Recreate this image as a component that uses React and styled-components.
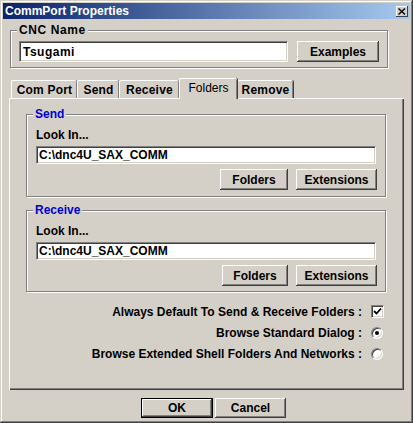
import styled, { createGlobalStyle } from "styled-components";

const face = "#d4d0c8";
const shadow = "#808080";
const darkShadow = "#404040";

const GlobalStyle = createGlobalStyle`
  html, body {
    margin: 0;
    padding: 0;
    background: ${face};
  }
  * {
    box-sizing: border-box;
  }
`;

const Window = styled.div`
  width: 413px;
  height: 423px;
  padding: 3px;
  background: ${face};
  font-family: "Liberation Sans", Arial, sans-serif;
  font-size: 11px;
  font-weight: bold;
  color: #000;
  box-shadow: inset -1px -1px 0 ${darkShadow}, inset 1px 1px 0 ${face},
    inset -2px -2px 0 ${shadow}, inset 2px 2px 0 #fff;
  display: flex;
  flex-direction: column;
`;

const TitleBar = styled.div`
  height: 16px;
  background: linear-gradient(to right, #0a246a, #a6caf0);
  display: flex;
  align-items: center;
  justify-content: space-between;
  padding: 0 2px 0 2px;
`;

const Title = styled.span`
  color: #fff;
  font-size: 12px;
  font-weight: bold;
  line-height: 14px;
`;

const CloseButton = styled.div`
  width: 12px;
  height: 11px;
  background: ${face};
  box-shadow: inset -1px -1px 0 ${darkShadow}, inset 1px 1px 0 #fff;
  display: flex;
  align-items: center;
  justify-content: center;
`;

const GroupBox = styled.div`
  position: relative;
  margin: ${(p) => p.$margin};
  width: ${(p) => p.$width}px;
  height: ${(p) => p.$height}px;
  border: 1px solid ${shadow};
  box-shadow: inset 1px 1px 0 #fff, 1px 1px 0 #fff;
  padding: ${(p) => p.$padding};
`;

const Legend = styled.span`
  position: absolute;
  top: -8px;
  left: 6px;
  padding: 0 2px;
  background: ${face};
  line-height: 14px;
  font-size: 12px;
  letter-spacing: ${(p) => p.$spacing || 0}px;
  color: ${(p) => p.$color || "#000"};
`;

const Row = styled.div`
  display: flex;
  align-items: center;
  justify-content: ${(p) => p.$justify || "flex-start"};
  gap: ${(p) => p.$gap || 0}px;
`;

const TextField = styled.div`
  width: ${(p) => p.$width}px;
  height: ${(p) => p.$height}px;
  background: #fff;
  border: 1px solid;
  border-color: ${shadow} #fff #fff ${shadow};
  box-shadow: inset 1px 1px 0 ${darkShadow}, inset -1px -1px 0 ${face};
  padding: 0 2px 0 ${(p) => p.$indent || 2}px;
  display: flex;
  align-items: center;
  font-size: 12px;
  letter-spacing: ${(p) => p.$spacing || 0}px;
  white-space: nowrap;
`;

const Button = styled.div`
  width: ${(p) => p.$width}px;
  height: ${(p) => p.$height || 21}px;
  background: ${face};
  display: flex;
  align-items: center;
  justify-content: center;
  font-size: 12px;
  border: ${(p) => (p.$default ? "1px solid #000" : "none")};
  box-shadow: inset -1px -1px 0 ${darkShadow}, inset 1px 1px 0 #fff,
    inset -2px -2px 0 ${shadow};
`;

const TabArea = styled.div`
  margin: 10px 0 0 6px;
  width: 395px;
`;

const TabStrip = styled.div`
  display: flex;
  align-items: flex-end;
  height: 20px;
  padding-left: 2px;
`;

const Tab = styled.div`
  position: relative;
  z-index: ${(p) => (p.$active ? 1 : 0)};
  width: ${(p) => p.$width}px;
  height: ${(p) => (p.$active ? 21 : 18)}px;
  margin-bottom: ${(p) => (p.$active ? -1 : 0)}px;
  background: ${face};
  border-top: 1px solid #fff;
  border-left: 1px solid #fff;
  border-top-left-radius: 2px;
  border-top-right-radius: 2px;
  box-shadow: inset -1px 0 0 ${shadow}, 1px 0 0 ${darkShadow};
  display: flex;
  align-items: center;
  justify-content: center;
  padding-bottom: ${(p) => (p.$active ? 2 : 0)}px;
  font-size: 12px;
  letter-spacing: ${(p) => (p.$active ? 0 : 0.2)}px;
  font-weight: ${(p) => (p.$active ? "normal" : "bold")};
`;

const Panel = styled.div`
  height: 292px;
  border-top: 1px solid #fff;
  border-left: 1px solid #fff;
  box-shadow: inset -1px -1px 0 ${darkShadow}, inset -2px -2px 0 ${shadow};
  padding: 15px 0 0 16px;
`;

const FieldLabel = styled.div`
  line-height: 13px;
  font-size: 12px;
  margin-bottom: 4px;
`;

const OptionList = styled.div`
  margin-top: 9px;
  width: 358px;
  display: flex;
  flex-direction: column;
  align-items: flex-end;
`;

const Option = styled.div`
  height: 21px;
  display: flex;
  align-items: center;
  gap: 9px;
  font-size: 12px;
`;

const CheckBox = styled.div`
  width: 13px;
  height: 13px;
  background: #fff;
  border: 1px solid;
  border-color: ${shadow} #fff #fff ${shadow};
  box-shadow: inset 1px 1px 0 ${darkShadow}, inset -1px -1px 0 ${face};
  display: flex;
  align-items: center;
  justify-content: center;
`;

const Radio = styled.div`
  width: 12px;
  height: 12px;
  margin-right: 1px;
  border-radius: 50%;
  background: #fff;
  border: 1px solid;
  border-color: ${shadow} #fff #fff ${shadow};
  box-shadow: inset 1px 1px 0 ${darkShadow}, inset -1px -1px 0 ${face};
  display: flex;
  align-items: center;
  justify-content: center;
`;

const RadioDot = styled.div`
  width: 4px;
  height: 4px;
  border-radius: 50%;
  background: #000;
`;

const Footer = styled.div`
  display: flex;
  gap: 2px;
  margin: 8px 0 0 138px;
`;

const FolderGroup = ({ title, path, margin, height, folderWidth }) => (
  <GroupBox $margin={margin} $width={360} $height={height} $padding="14px 0 0 9px">
    <Legend $color="#0000d8">{title}</Legend>
    <FieldLabel>Look In...</FieldLabel>
    <TextField $width={340} $height={18}>{path}</TextField>
    <Row $justify="flex-end" $gap={8} style={{ marginTop: 5, paddingRight: 8 }}>
      <Button $width={folderWidth}>Folders</Button>
      <Button $width={81}>Extensions</Button>
    </Row>
  </GroupBox>
);

const tabs = [
  { label: "Com Port", width: 66 },
  { label: "Send", width: 42 },
  { label: "Receive", width: 60 },
  { label: "Folders", width: 58, active: true },
  { label: "Remove", width: 56 },
];

export default function App() {
  return (
    <>
      <GlobalStyle />
      <Window>
        <TitleBar>
          <Title>CommPort Properties</Title>
          <CloseButton>
            <svg width="8" height="7" viewBox="0 0 8 7">
              <path d="M0.5 0.5 L7 6.5 M7 0.5 L0.5 6.5" stroke="#000" strokeWidth="1.4" />
            </svg>
          </CloseButton>
        </TitleBar>

        <GroupBox $margin="11px 0 0 7px" $width={378} $height={38} $padding="10px 0 0 8px">
          <Legend $spacing={0.6}>CNC Name</Legend>
          <Row $gap={9}>
            <TextField $width={269} $height={21} $indent={3} $spacing={0.5}>Tsugami</TextField>
            <Button $width={82}>Examples</Button>
          </Row>
        </GroupBox>

        <TabArea>
          <TabStrip>
            {tabs.map((t) => (
              <Tab key={t.label} $width={t.width} $active={t.active}>
                {t.label}
              </Tab>
            ))}
          </TabStrip>
          <Panel>
            <FolderGroup title="Send" path="C:\dnc4U_SAX_COMM" margin="0" height={83} folderWidth={68} />
            <FolderGroup title="Receive" path="C:\dnc4U_SAX_COMM" margin="13px 0 0 0" height={82} folderWidth={66} />
            <OptionList>
              <Option>
                Always Default To Send &amp; Receive Folders :
                <CheckBox>
                  <svg width="9" height="9" viewBox="0 0 9 9">
                    <path d="M1 4 L3.5 6.5 L8 1.5" fill="none" stroke="#000" strokeWidth="1.8" />
                  </svg>
                </CheckBox>
              </Option>
              <Option>
                Browse Standard Dialog :
                <Radio>
                  <RadioDot />
                </Radio>
              </Option>
              <Option>
                Browse Extended Shell Folders And Networks :
                <Radio />
              </Option>
            </OptionList>
          </Panel>
        </TabArea>

        <Footer>
          <Button $width={72} $height={20} $default>OK</Button>
          <Button $width={71} $height={20}>Cancel</Button>
        </Footer>
      </Window>
    </>
  );
}
